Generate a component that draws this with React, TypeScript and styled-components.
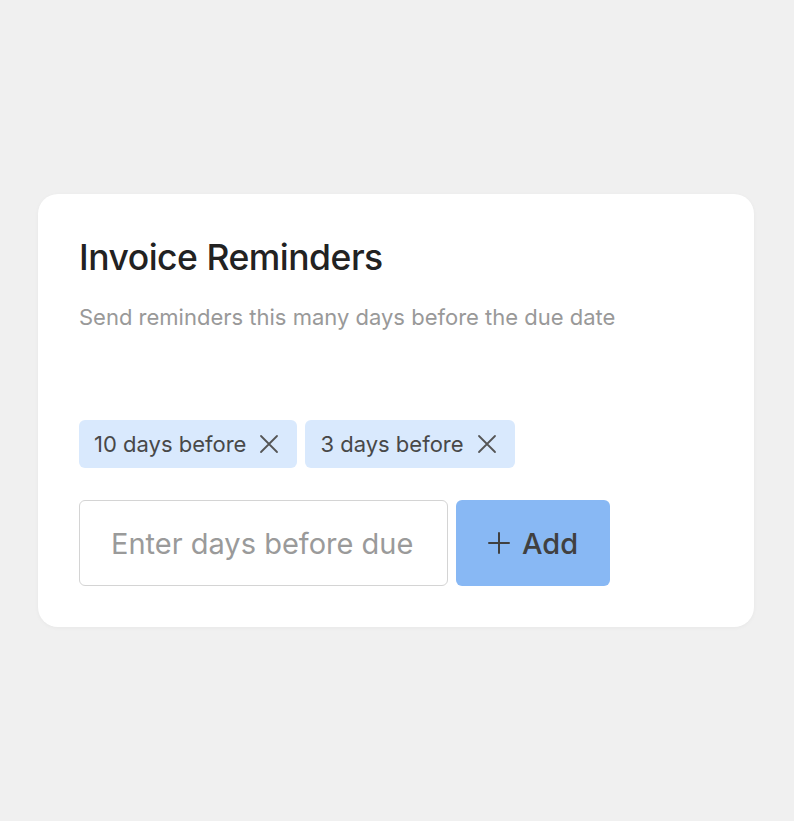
import { FC, useState } from "react";
import styled, { createGlobalStyle } from "styled-components";

const GlobalStyle = createGlobalStyle`
  html, body {
    margin: 0;
    padding: 0;
    background-color: #F0F0F0;
    font-family: Inter, "Noto Sans", sans-serif;
  }
`;

const Page = styled.div`
  width: 794px;
  height: 821px;
  box-sizing: border-box;
  padding: 194px 40px 0 38px;
`;

const Card = styled.section`
  width: 716px;
  height: 433px;
  box-sizing: border-box;
  background-color: #FFFFFF;
  border-radius: 20px;
  box-shadow: 0 1px 4px rgba(0, 0, 0, 0.04);
  padding: 38px 41px 0;
`;

const Title = styled.h1`
  margin: 0;
  font-size: 35.5px;
  line-height: 52px;
  font-weight: 500;
  color: #222222;
  letter-spacing: -0.5px;
`;

const Subtitle = styled.p`
  margin: 18px 0 0;
  font-size: 22px;
  line-height: 30px;
  color: #999999;
`;

const ChipList = styled.div`
  display: flex;
  gap: 8px;
  margin-top: 88px;
`;

const Chip = styled.div`
  height: 48px;
  box-sizing: border-box;
  display: flex;
  align-items: center;
  gap: 13px;
  padding: 0 18px 0 15px;
  background-color: #D9E9FD;
  border-radius: 6px;
  font-size: 22px;
  color: #484848;
`;

const RemoveButton = styled.button`
  border: none;
  background: none;
  padding: 0;
  display: flex;
  color: #555555;
  cursor: pointer;
`;

const AddRow = styled.div`
  display: flex;
  gap: 8px;
  margin-top: 32px;
`;

const DaysInput = styled.input`
  width: 369px;
  height: 86px;
  box-sizing: border-box;
  border: 1px solid #D4D4D4;
  border-radius: 6px;
  padding: 0 31px;
  font-family: inherit;
  font-size: 29px;
  color: #333333;
  outline: none;

  &::placeholder {
    color: #9A9A9A;
  }
`;

const AddButton = styled.button`
  width: 154px;
  height: 86px;
  border: none;
  border-radius: 6px;
  background-color: #88B8F4;
  display: flex;
  align-items: center;
  justify-content: center;
  gap: 12px;
  font-family: inherit;
  font-size: 29px;
  font-weight: 500;
  color: #404040;
  cursor: pointer;
`;

const CloseIcon: FC = () => (
  <svg width="20" height="20" viewBox="0 0 20 20" fill="none" stroke="currentColor" strokeWidth="1.8" strokeLinecap="round">
    <path d="M2 2L18 18M18 2L2 18" />
  </svg>
);

const PlusIcon: FC = () => (
  <svg width="22" height="22" viewBox="0 0 22 22" fill="none" stroke="currentColor" strokeWidth="2" strokeLinecap="round">
    <path d="M11 1V21M1 11H21" />
  </svg>
);

const App: FC = () => {
  const [days, setDays] = useState<number[]>([10, 3]);
  const [value, setValue] = useState("");

  const handleAdd = () => {
    const n = parseInt(value, 10);
    if (!isNaN(n) && !days.includes(n)) {
      setDays([...days, n]);
    }
    setValue("");
  };

  return (
    <Page>
      <GlobalStyle />
      <Card>
        <Title>Invoice Reminders</Title>
        <Subtitle>Send reminders this many days before the due date</Subtitle>

        <ChipList>
          {days.map((d) => (
            <Chip key={d}>
              {d} days before
              <RemoveButton onClick={() => setDays(days.filter((x) => x !== d))}>
                <CloseIcon />
              </RemoveButton>
            </Chip>
          ))}
        </ChipList>

        <AddRow>
          <DaysInput
            placeholder="Enter days before due"
            value={value}
            onChange={(e) => setValue(e.target.value)}
          />
          <AddButton onClick={handleAdd}>
            <PlusIcon />
            Add
          </AddButton>
        </AddRow>
      </Card>
    </Page>
  );
};

export default App;
